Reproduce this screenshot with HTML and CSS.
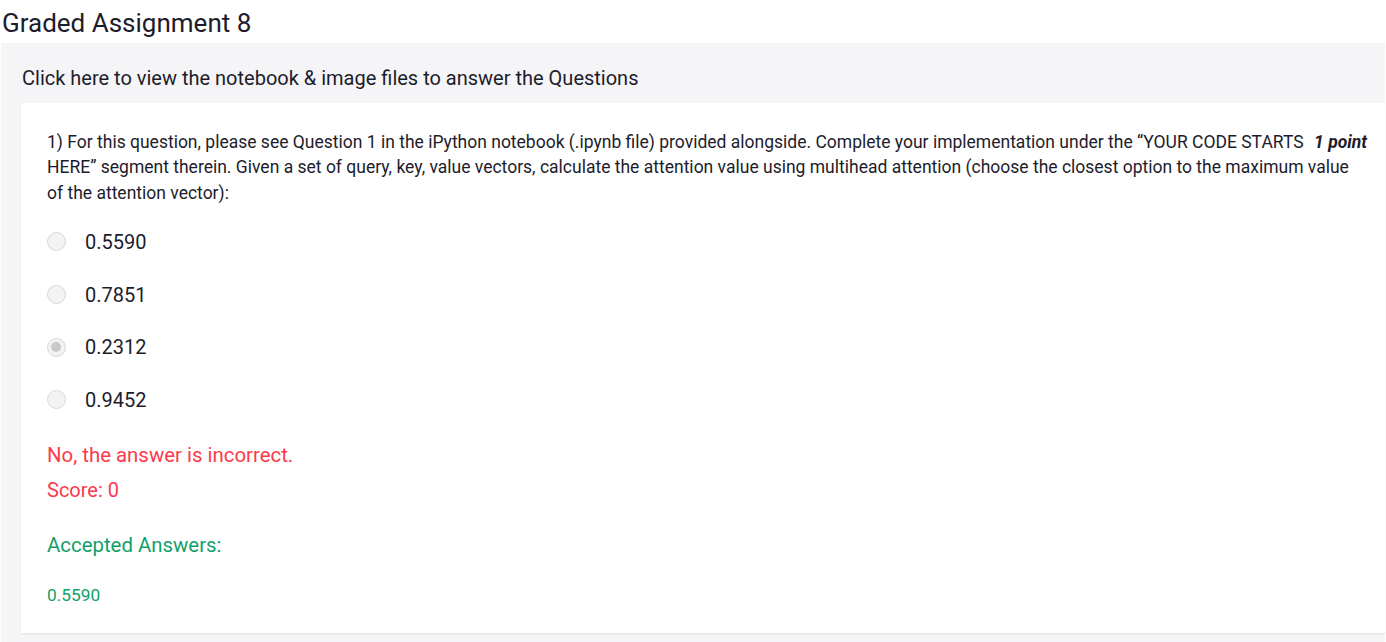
FILE: index.html
```html
<!DOCTYPE html>
<html>
<head>
<meta charset="utf-8">
<link rel="stylesheet" href="styles.css">
</head>
<body>
<h1 class="title">Graded Assignment 8</h1>
<div class="panel">
  <div class="panel-head">Click here to view the notebook &amp; image files to answer the Questions</div>
  <div class="card">
    <div class="question">
      <span class="points">1 point</span>
      1) For this question, please see Question 1 in the iPython notebook (.ipynb file) provided alongside. Complete your implementation under the “YOUR CODE STARTS HERE” segment therein. Given a set of query, key, value vectors, calculate the attention value using multihead attention (choose the closest option to the maximum value of the attention vector):
    </div>
    <ul class="options">
      <li class="option"><span class="radio"></span><span>0.5590</span></li>
      <li class="option"><span class="radio"></span><span>0.7851</span></li>
      <li class="option"><span class="radio checked"></span><span>0.2312</span></li>
      <li class="option"><span class="radio"></span><span>0.9452</span></li>
    </ul>
    <div class="wrong">No, the answer is incorrect.</div>
    <div class="score">Score: 0</div>
    <div class="accepted">Accepted Answers:</div>
    <div class="accepted-val">0.5590</div>
  </div>
</div>
</body>
</html>
```
FILE: styles.css
```css
html, body {
  margin: 0;
  padding: 0;
  background: #ffffff;
  font-family: Roboto, "Liberation Sans", Arial, sans-serif;
  color: #1d1c2b;
}
.title {
  margin: 0;
  padding: 7px 0 0 2px;
  height: 36px;
  font-size: 26px;
  font-weight: 400;
  line-height: 32px;
}
.panel {
  margin-left: 1px;
  margin-right: 1px;
  background: #f5f5f7;
  padding: 0 0 9px 20px;
}
.panel-head {
  height: 60px;
  line-height: 70px;
  font-size: 20px;
  padding-left: 1px;
}
.card {
  background: #ffffff;
  box-shadow: 0 1px 2px rgba(0,0,0,0.08);
  padding: 26.5px 18px 27px 26px;
  height: 476.5px;
}
.question {
  font-size: 17.5px;
  line-height: 25.5px;
}
.points {
  float: right;
  font-weight: 700;
  font-style: italic;
  margin-left: 6px;
}
.options {
  list-style: none;
  margin: 0;
  padding: 9.5px 0 0 0;
}
.option {
  display: flex;
  align-items: center;
  height: 52.7px;
  font-size: 20px;
}
.radio {
  width: 17px;
  height: 17px;
  border-radius: 50%;
  border: 1px solid #d8d8d8;
  background: #f3f3f3;
  margin-left: -0.5px;
  margin-right: 19.5px;
  box-sizing: content-box;
  position: relative;
}
.radio.checked::after {
  content: "";
  position: absolute;
  left: 3.5px;
  top: 3.5px;
  width: 10px;
  height: 10px;
  border-radius: 50%;
  background: #c9c9c9;
}
.wrong {
  color: #fb3a4b;
  font-size: 20.4px;
  line-height: 26px;
  margin-top: 16px;
}
.score {
  color: #fb3a4b;
  font-size: 20px;
  line-height: 26px;
  margin-top: 9px;
}
.accepted {
  color: #12a06a;
  font-size: 20.4px;
  line-height: 26px;
  margin-top: 29px;
}
.accepted-val {
  color: #12a06a;
  font-size: 17.3px;
  line-height: 26px;
  margin-top: 24px;
}
```
